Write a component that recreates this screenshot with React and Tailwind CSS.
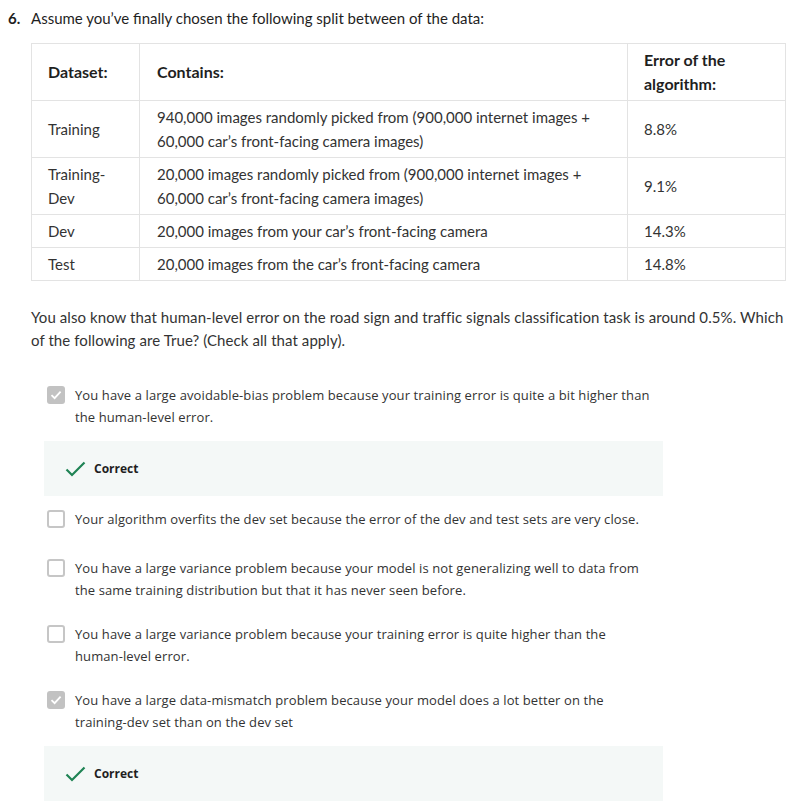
import React from "react"

const rows = [
    { name: ["Training"], contains: ["940,000 images randomly picked from (900,000 internet images +", "60,000 car’s front-facing camera images)"], err: "8.8%" },
    { name: ["Training-", "Dev"], contains: ["20,000 images randomly picked from (900,000 internet images +", "60,000 car’s front-facing camera images)"], err: "9.1%" },
    { name: ["Dev"], contains: ["20,000 images from your car’s front-facing camera"], err: "14.3%" },
    { name: ["Test"], contains: ["20,000 images from the car’s front-facing camera"], err: "14.8%" },
]

const options = [
    { lines: ["You have a large avoidable-bias problem because your training error is quite a bit higher than", "the human-level error."], checked: true },
    { lines: ["Your algorithm overfits the dev set because the error of the dev and test sets are very close."], checked: false },
    { lines: ["You have a large variance problem because your model is not generalizing well to data from", "the same training distribution but that it has never seen before."], checked: false },
    { lines: ["You have a large variance problem because your training error is quite higher than the", "human-level error."], checked: false },
    { lines: ["You have a large data-mismatch problem because your model does a lot better on the", "training-dev set than on the dev set"], checked: true },
]

const Checkbox = ({ checked }) =>
    checked ? (
        <div className="w-[18px] h-[18px] rounded-[3px] bg-[#c2c2c2] flex items-center justify-center shrink-0 mt-[2px]">
            <svg width="14" height="14" viewBox="0 0 14 14" fill="none">
                <path d="M2.5 7.2 L5.6 10.2 L11.6 3.6" stroke="#fff" strokeWidth="1.8" />
            </svg>
        </div>
    ) : (
        <div className="w-[18px] h-[18px] rounded-[3px] border-2 border-[#c6c6c6] bg-white shrink-0 mt-[2px]" />
    )

const CorrectBox = () => (
    <div className="ml-[44px] w-[619px] h-[55px] bg-[#f4f8f7] flex items-center pl-[21px]">
        <svg width="21" height="16" viewBox="0 0 21 16" fill="none">
            <path d="M1.5 8.5 L7 14 L19.5 1.5" stroke="#1f8354" strokeWidth="2.2" />
        </svg>
        <span className="ml-[8px] text-[12px] font-bold tracking-normal text-[#1f1f1f]">Correct</span>
    </div>
)

const App = () => {
    return (
        <div className="w-[790px] h-[804px] bg-white overflow-hidden text-[#1f1f1f] font-['Lato',sans-serif]">
            <div className="flex pt-[8px] text-[15px] leading-[20px]">
                <span className="w-[31px] pl-[8px] font-bold">6.</span>
                <span>Assume you’ve finally chosen the following split between of the data:</span>
            </div>

            <table className="ml-[31px] mt-[15px] w-[755px] border-collapse text-[15px] leading-[24px] text-[#333]">
                <thead>
                    <tr className="h-[57px] text-[16px]">
                        <th className="w-[108px] border border-[#e3e3e3] pl-[16px] text-left font-bold text-[#1f1f1f]">Dataset:</th>
                        <th className="w-[488px] border border-[#e3e3e3] pl-[17px] text-left font-bold text-[#1f1f1f]">Contains:</th>
                        <th className="border border-[#e3e3e3] pl-[16px] text-left font-bold text-[#1f1f1f]">Error of the<br />algorithm:</th>
                    </tr>
                </thead>
                <tbody>
                    {rows.map((r, i) => (
                        <tr key={i}>
                            <td className="border border-[#e3e3e3] pl-[16px] py-[4px]">
                                {r.name.map((n, j) => <div key={j}>{n}</div>)}
                            </td>
                            <td className="border border-[#e3e3e3] pl-[17px] py-[4px]">
                                {r.contains.map((c, j) => <div key={j}>{c}</div>)}
                            </td>
                            <td className="border border-[#e3e3e3] pl-[16px] py-[4px]">{r.err}</td>
                        </tr>
                    ))}
                </tbody>
            </table>

            <p className="ml-[31px] mt-[25px] text-[15px] leading-[23px] tracking-[0.08px] text-[#333]">
                You also know that human-level error on the road sign and traffic signals classification task is around 0.5%. Which
                <br />of the following are True? (Check all that apply).
            </p>

            <div className="mt-[32px] font-['Open_Sans',sans-serif] text-[13px] leading-[22px] tracking-[0.1px] text-[#333]">
                {options.map((o, i) => (
                    <div key={i}>
                        <div className={o.checked ? "flex gap-[10px] ml-[47px] mb-[13px]" : "flex gap-[10px] ml-[47px] min-h-[49px] pb-[22px]"}>
                            <Checkbox checked={o.checked} />
                            <div>
                                {o.lines.map((l, j) => <div key={j}>{l}</div>)}
                            </div>
                        </div>
                        {o.checked && (
                            <div className="mb-[12px]">
                                <CorrectBox />
                            </div>
                        )}
                    </div>
                ))}
            </div>
        </div>
    )
}

export default App
